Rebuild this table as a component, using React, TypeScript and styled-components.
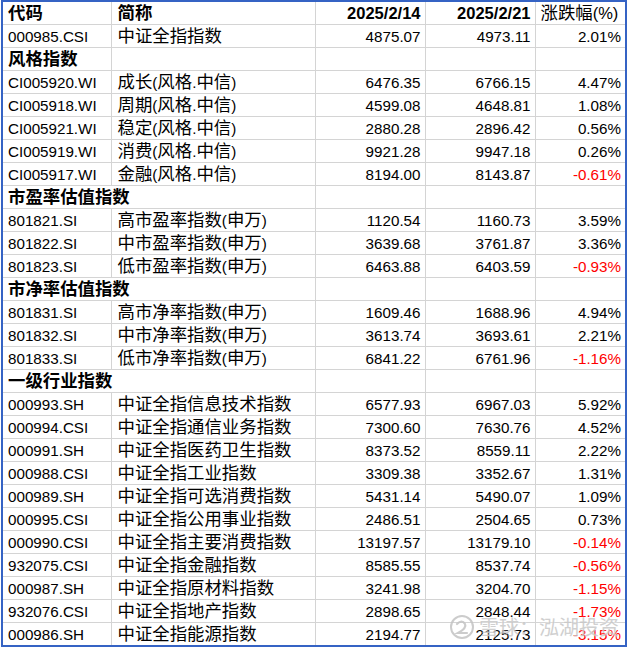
import React from 'react';
import styled, { createGlobalStyle } from 'styled-components';

type Row =
  | { kind: 'section'; title: string; wide?: boolean }
  | { kind: 'data'; code: string; name: string; a: string; b: string; chg: string };

const colWidths = [108, 204, 110, 110, 90];

const rows: Row[] = [
  { kind: 'data', code: '000985.CSI', name: '中证全指指数', a: '4875.07', b: '4973.11', chg: '2.01%' },
  { kind: 'section', title: '风格指数' },
  { kind: 'data', code: 'CI005920.WI', name: '成长(风格.中信)', a: '6476.35', b: '6766.15', chg: '4.47%' },
  { kind: 'data', code: 'CI005918.WI', name: '周期(风格.中信)', a: '4599.08', b: '4648.81', chg: '1.08%' },
  { kind: 'data', code: 'CI005921.WI', name: '稳定(风格.中信)', a: '2880.28', b: '2896.42', chg: '0.56%' },
  { kind: 'data', code: 'CI005919.WI', name: '消费(风格.中信)', a: '9921.28', b: '9947.18', chg: '0.26%' },
  { kind: 'data', code: 'CI005917.WI', name: '金融(风格.中信)', a: '8194.00', b: '8143.87', chg: '-0.61%' },
  { kind: 'section', title: '市盈率估值指数', wide: true },
  { kind: 'data', code: '801821.SI', name: '高市盈率指数(申万)', a: '1120.54', b: '1160.73', chg: '3.59%' },
  { kind: 'data', code: '801822.SI', name: '中市盈率指数(申万)', a: '3639.68', b: '3761.87', chg: '3.36%' },
  { kind: 'data', code: '801823.SI', name: '低市盈率指数(申万)', a: '6463.88', b: '6403.59', chg: '-0.93%' },
  { kind: 'section', title: '市净率估值指数', wide: true },
  { kind: 'data', code: '801831.SI', name: '高市净率指数(申万)', a: '1609.46', b: '1688.96', chg: '4.94%' },
  { kind: 'data', code: '801832.SI', name: '中市净率指数(申万)', a: '3613.74', b: '3693.61', chg: '2.21%' },
  { kind: 'data', code: '801833.SI', name: '低市净率指数(申万)', a: '6841.22', b: '6761.96', chg: '-1.16%' },
  { kind: 'section', title: '一级行业指数', wide: true },
  { kind: 'data', code: '000993.SH', name: '中证全指信息技术指数', a: '6577.93', b: '6967.03', chg: '5.92%' },
  { kind: 'data', code: '000994.CSI', name: '中证全指通信业务指数', a: '7300.60', b: '7630.76', chg: '4.52%' },
  { kind: 'data', code: '000991.SH', name: '中证全指医药卫生指数', a: '8373.52', b: '8559.11', chg: '2.22%' },
  { kind: 'data', code: '000988.CSI', name: '中证全指工业指数', a: '3309.38', b: '3352.67', chg: '1.31%' },
  { kind: 'data', code: '000989.SH', name: '中证全指可选消费指数', a: '5431.14', b: '5490.07', chg: '1.09%' },
  { kind: 'data', code: '000995.CSI', name: '中证全指公用事业指数', a: '2486.51', b: '2504.65', chg: '0.73%' },
  { kind: 'data', code: '000990.CSI', name: '中证全指主要消费指数', a: '13197.57', b: '13179.10', chg: '-0.14%' },
  { kind: 'data', code: '932075.CSI', name: '中证全指金融指数', a: '8585.55', b: '8537.74', chg: '-0.56%' },
  { kind: 'data', code: '000987.SH', name: '中证全指原材料指数', a: '3241.98', b: '3204.70', chg: '-1.15%' },
  { kind: 'data', code: '932076.CSI', name: '中证全指地产指数', a: '2898.65', b: '2848.44', chg: '-1.73%' },
  { kind: 'data', code: '000986.SH', name: '中证全指能源指数', a: '2194.77', b: '2125.73', chg: '-3.15%' },
];

// chinese characters render a bit bigger than latin in the sheet
const Mixed: React.FC<{ text: string }> = ({ text }) => {
  const parts = text.split(/([\u3000-\u9fff\uff00-\uffef]+)/).filter(Boolean);
  return (
    <>
      {parts.map((p, i) =>
        /[\u3000-\u9fff\uff00-\uffef]/.test(p) ? <StyledHan key={i}>{p}</StyledHan> : <span key={i}>{p}</span>
      )}
    </>
  );
};

type CellProps = {
  $bold?: boolean;
  $right?: boolean;
  $neg?: boolean;
  $name?: boolean;
  $big?: boolean;
  colSpan?: number;
  head?: boolean;
  children?: React.ReactNode;
};

const Cell: React.FC<CellProps> = ({ head, colSpan, children, ...rest }) => (
  <StyledCell as={head ? 'th' : 'td'} colSpan={colSpan}>
    <StyledInner {...rest}>{children}</StyledInner>
  </StyledCell>
);

const App: React.FC = () => {
  return (
    <>
      <GlobalStyle />
      <StyledFrame>
        <StyledTable>
          <colgroup>
            {colWidths.map((w, i) => (
              <StyledCol key={i} $w={w} />
            ))}
          </colgroup>
          <thead>
            <tr>
              <Cell head $bold><Mixed text="代码" /></Cell>
              <Cell head $bold $name><Mixed text="简称" /></Cell>
              <Cell head $bold $right $big>2025/2/14</Cell>
              <Cell head $bold $right $big>2025/2/21</Cell>
              <Cell head $big><Mixed text="涨跌幅(%)" /></Cell>
            </tr>
          </thead>
          <tbody>
            {rows.map((r, i) =>
              r.kind === 'section' ? (
                <tr key={i}>
                  {r.wide ? (
                    <Cell colSpan={2} $bold><Mixed text={r.title} /></Cell>
                  ) : (
                    <>
                      <Cell $bold><Mixed text={r.title} /></Cell>
                      <Cell />
                    </>
                  )}
                  <Cell />
                  <Cell />
                  <Cell />
                </tr>
              ) : (
                <tr key={i}>
                  <Cell>{r.code}</Cell>
                  <Cell $name><Mixed text={r.name} /></Cell>
                  <Cell $right>{r.a}</Cell>
                  <Cell $right>{r.b}</Cell>
                  <Cell $right $neg={r.chg.startsWith('-')}>{r.chg}</Cell>
                </tr>
              )
            )}
          </tbody>
        </StyledTable>

        <StyledWatermark>
          <svg width="26" height="26" viewBox="0 0 26 26">
            <circle cx="13" cy="13" r="11" fill="none" stroke="#c4c4c4" strokeWidth="2" />
            <path d="M8 10 Q13 5 16 10 Q18 14 9 19 L18 19" fill="none" stroke="#c4c4c4" strokeWidth="2.2" strokeLinecap="round" />
          </svg>
          <span>雪球：泓湖投资</span>
        </StyledWatermark>
      </StyledFrame>
    </>
  );
};

export default App;

// Style Tags
const GlobalStyle = createGlobalStyle`
  body {
    margin: 0;
    background: #ffffff;
    font-family: "Liberation Sans", "Noto Sans CJK SC", sans-serif;
  }
`;

const StyledFrame = styled.div`
  position: relative;
  width: 622px;
  margin-left: 1px;
  border: 2px solid #3563c4;
  overflow: hidden;
`;

const StyledTable = styled.table`
  width: 622px;
  border-collapse: collapse;
  table-layout: fixed;
  tr:first-child > * {
    border-top: none;
  }
  tr > *:first-child {
    border-left: none;
  }
  tr > *:last-child {
    border-right: none;
  }
  tbody tr:last-child > * {
    border-bottom: none;
  }
`;

const StyledCol = styled.col<{ $w: number }>`
  width: ${(p) => p.$w}px;
`;

const StyledCell = styled.td`
  height: 22px;
  padding: 0;
  border: 1px solid #d4d4d4;
  vertical-align: top;
`;

const StyledInner = styled.div<{ $bold?: boolean; $right?: boolean; $neg?: boolean; $name?: boolean; $big?: boolean }>`
  height: 22px;
  overflow: visible;
  padding: 1px ${(p) => (p.$right ? '4px' : '0')} 0 ${(p) => (p.$name ? '6px' : '5px')};
  box-sizing: border-box;
  font-size: ${(p) => (p.$big ? '16.5px' : '15.2px')};
  line-height: 21px;
  white-space: nowrap;
  text-align: ${(p) => (p.$right ? 'right' : 'left')};
  font-weight: ${(p) => (p.$bold ? 700 : 400)};
  color: ${(p) => (p.$neg ? '#ff0000' : '#000000')};
  font-family: "Liberation Sans", "Noto Sans CJK SC", sans-serif;
`;

const StyledHan = styled.span`
  font-family: "Noto Sans CJK SC", sans-serif;
  font-size: 17.4px;
  line-height: 1;
`;

const StyledWatermark = styled.div`
  position: absolute;
  right: 6px;
  bottom: 4px;
  display: flex;
  align-items: center;
  gap: 4px;
  color: #c8c8c8;
  font-size: 20px;
  font-family: "Noto Sans CJK SC", sans-serif;
  opacity: 0.85;
  pointer-events: none;
  text-shadow: 0 0 2px #ffffff;
`;
